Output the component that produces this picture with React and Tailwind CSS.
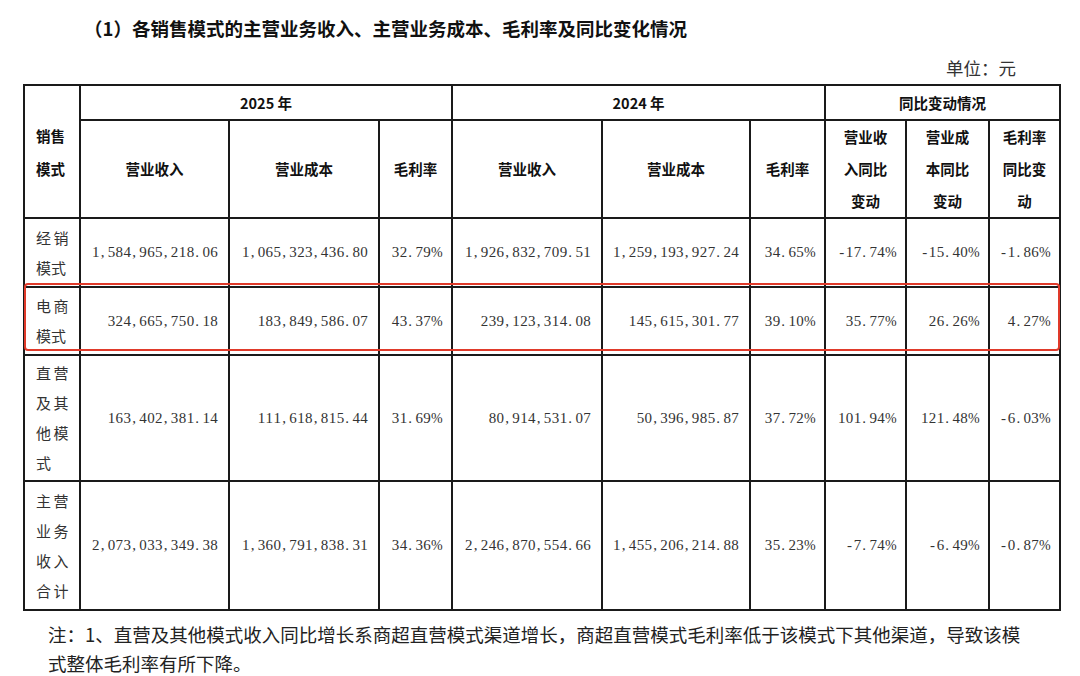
const rows = [
  {
    label: [['经销', true], ['模式', false]],
    vals: ['1,584,965,218.06', '1,065,323,436.80', '32.79%', '1,926,832,709.51', '1,259,193,927.24', '34.65%', '-17.74%', '-15.40%', '-1.86%'],
    h: 'h-[69px]',
  },
  {
    label: [['电商', true], ['模式', false]],
    vals: ['324,665,750.18', '183,849,586.07', '43.37%', '239,123,314.08', '145,615,301.77', '39.10%', '35.77%', '26.26%', '4.27%'],
    h: 'h-[68px]',
  },
  {
    label: [['直营', true], ['及其', true], ['他模', true], ['式', true]],
    vals: ['163,402,381.14', '111,618,815.44', '31.69%', '80,914,531.07', '50,396,985.87', '37.72%', '101.94%', '121.48%', '-6.03%'],
    h: 'h-[126px]',
  },
  {
    label: [['主营', true], ['业务', true], ['收入', true], ['合计', true]],
    vals: ['2,073,033,349.38', '1,360,791,838.31', '34.36%', '2,246,870,554.66', '1,455,206,214.88', '35.23%', '-7.74%', '-6.49%', '-0.87%'],
    h: 'h-[129px]',
  },
];

// SimSun-like half-width digits: every char takes the same cell
function Num({ v }) {
  return (
    <span className="inline-flex items-baseline">
      {[...v].map((c, i) => {
        let cls = 'w-[7.9px] text-center';
        if (c === '%') cls = 'w-[10px] text-center text-[14px]';
        if (c === ',' || c === '.') cls = 'w-[7.9px] text-left pl-[1px]';
        return (
          <span key={i} className={cls}>
            {c}
          </span>
        );
      })}
    </span>
  );
}

const cell = 'border-2 border-[#1a1a1a]';
const cjk = "font-['Noto_Sans_CJK_SC',sans-serif]";

export default function App() {
  return (
    <div className="w-[1080px] h-[676px] bg-white text-[#1a1a1a] pt-[14px] overflow-hidden">
      <div className={`${cjk} pl-[84px] text-[18.5px] leading-[28px] font-bold text-[#111]`}>
        （1）各销售模式的主营业务收入、主营业务成本、毛利率及同比变化情况
      </div>

      <div className={`${cjk} mt-[14px] pr-[64px] text-right text-[17.5px] leading-[24px] text-[#333]`}>
        单位：元
      </div>

      <div className="relative ml-[23px] mt-[4px] w-[1036px]">
        <table className="w-[1036px] table-fixed border-collapse border-2 border-[#1a1a1a]">
          <colgroup>
            <col className="w-[56px]" />
            <col className="w-[149px]" />
            <col className="w-[150px]" />
            <col className="w-[73px]" />
            <col className="w-[150px]" />
            <col className="w-[148px]" />
            <col className="w-[75px]" />
            <col className="w-[81px]" />
            <col className="w-[83px]" />
            <col className="w-[71px]" />
          </colgroup>
          <thead className={`${cjk} text-[14.5px] font-bold text-[#111]`}>
            <tr className="h-[35px]">
              <th rowSpan={2} className={`${cell} text-left pl-[11px] leading-[33px] font-bold`}>
                销售
                <br />
                模式
              </th>
              <th colSpan={3} className={`${cell} font-bold`}>2025 年</th>
              <th colSpan={3} className={`${cell} font-bold`}>2024 年</th>
              <th colSpan={3} className={`${cell} font-bold`}>同比变动情况</th>
            </tr>
            <tr className="h-[96px]">
              <th className={`${cell} font-bold`}>营业收入</th>
              <th className={`${cell} font-bold`}>营业成本</th>
              <th className={`${cell} font-bold`}>毛利率</th>
              <th className={`${cell} font-bold`}>营业收入</th>
              <th className={`${cell} font-bold`}>营业成本</th>
              <th className={`${cell} font-bold`}>毛利率</th>
              <th className={`${cell} font-bold leading-[32px]`}>
                营业收
                <br />
                入同比
                <br />
                变动
              </th>
              <th className={`${cell} font-bold leading-[32px]`}>
                营业成
                <br />
                本同比
                <br />
                变动
              </th>
              <th className={`${cell} font-bold leading-[32px]`}>
                毛利率
                <br />
                同比变
                <br />
                动
              </th>
            </tr>
          </thead>
          <tbody className="font-['Liberation_Serif',serif] text-[15px] text-[#333]">
            {rows.map((r, ri) => (
              <tr key={ri} className={r.h}>
                <td className={`${cell} ${cjk} pl-[11px] text-[15px] leading-[30px] text-[#333]`}>
                  {r.label.map(([t, spaced], li) => (
                    <div key={li} className={spaced ? 'tracking-[2.5px]' : ''}>
                      {t}
                    </div>
                  ))}
                </td>
                {r.vals.map((v, vi) => (
                  <td key={vi} className={`${cell} text-right pr-[10px]`}>
                    <Num v={v} />
                  </td>
                ))}
              </tr>
            ))}
          </tbody>
        </table>

        {/* red highlight over the 电商模式 row */}
        <div className="absolute left-[1px] top-[199px] w-[1036px] h-[68px] border-[2.5px] border-[#e03a2a] rounded-[4px] pointer-events-none" />
      </div>

      <div className={`${cjk} mt-[9px] pl-[48px] text-[18.5px] leading-[29px] text-[#222] whitespace-nowrap`}>
        <div>注：1、直营及其他模式收入同比增长系商超直营模式渠道增长，商超直营模式毛利率低于该模式下其他渠道，导致该模</div>
        <div>式整体毛利率有所下降。</div>
      </div>
    </div>
  );
}
